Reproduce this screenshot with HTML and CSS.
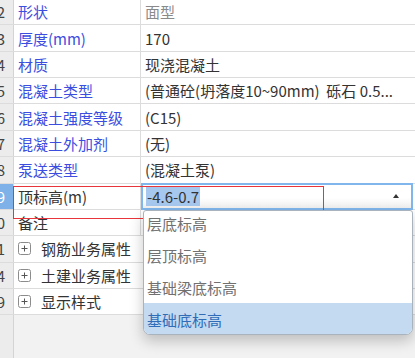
FILE: index.html
```html
<!DOCTYPE html>
<html lang="zh-CN">

<head>
	<meta charset="UTF-8">
	<meta name="viewport" content="width=device-width, initial-scale=1.0">
	<title>属性编辑</title>
	<link rel="stylesheet" href="styles.css">
</head>

<body>
	<div class="sheet">
		<div class="row"><div class="num">2</div><div class="label link">形状</div><div class="value muted">面型</div></div>
		<div class="row"><div class="num">3</div><div class="label link">厚度(mm)</div><div class="value">170</div></div>
		<div class="row"><div class="num">4</div><div class="label link">材质</div><div class="value">现浇混凝土</div></div>
		<div class="row"><div class="num">5</div><div class="label link">混凝土类型</div><div class="value">(普通砼(坍落度10~90mm)  砾石 0.5...</div></div>
		<div class="row"><div class="num">6</div><div class="label link">混凝土强度等级</div><div class="value">(C15)</div></div>
		<div class="row"><div class="num">7</div><div class="label link">混凝土外加剂</div><div class="value">(无)</div></div>
		<div class="row"><div class="num">8</div><div class="label link">泵送类型</div><div class="value">(混凝土泵)</div></div>
		<div class="row"><div class="num active">9</div><div class="label">顶标高(m)</div>
			<div class="value edit">
				<div class="combo"><span class="sel">-4.6-0.7</span><span class="arrow"></span></div>
			</div>
		</div>
		<div class="row"><div class="num">0</div><div class="label">备注</div><div class="value"></div></div>
		<div class="row"><div class="num">1</div>
			<div class="label wide"><svg class="plus" width="13" height="13" viewBox="0 0 13 13"><rect x="0.5" y="0.5" width="12" height="12" rx="2" fill="#fff" stroke="#8c8c8c"/><path d="M3.5 6.5h6M6.5 3.5v6" stroke="#555" stroke-width="1"/></svg>钢筋业务属性</div>
		</div>
		<div class="row"><div class="num">4</div>
			<div class="label wide"><svg class="plus" width="13" height="13" viewBox="0 0 13 13"><rect x="0.5" y="0.5" width="12" height="12" rx="2" fill="#fff" stroke="#8c8c8c"/><path d="M3.5 6.5h6M6.5 3.5v6" stroke="#555" stroke-width="1"/></svg>土建业务属性</div>
		</div>
		<div class="row"><div class="num">9</div>
			<div class="label wide"><svg class="plus" width="13" height="13" viewBox="0 0 13 13"><rect x="0.5" y="0.5" width="12" height="12" rx="2" fill="#fff" stroke="#8c8c8c"/><path d="M3.5 6.5h6M6.5 3.5v6" stroke="#555" stroke-width="1"/></svg>显示样式</div>
		</div>

		<!-- 标注框 -->
		<div class="mark"></div>

		<!-- 下拉列表 -->
		<div class="dropdown">
			<ul class="list">
				<li>层底标高</li>
				<li>层顶标高</li>
				<li>基础梁底标高</li>
				<li class="current">基础底标高</li>
			</ul>
		</div>
	</div>
</body>

</html>
```

FILE: styles.css
```css
* {
	box-sizing: border-box;
}

body {
	margin: 0;
	width: 415px;
	height: 358px;
	overflow: hidden;
	background: #f2f2f2;
	font-family: "Noto Sans CJK SC", "Noto Sans", sans-serif;
	font-size: 15px;
	color: #333;
}

.sheet {
	position: relative;
	height: 360px;
	margin-top: -1px;
	/* 行号列一直延伸到底部 */
	background: linear-gradient(to right, #ececec 13px, #d4d4d4 13px, #d4d4d4 14px, transparent 14px);
}

.row {
	display: flex;
	height: 26.36px;
	border-bottom: 1px solid #dcdcdc;
	background: #fff;
}

.num {
	width: 14px;
	flex: none;
	display: flex;
	justify-content: flex-end;
	align-items: center;
	padding-right: 8px;
	overflow: hidden;
	background: #ececec;
	border-right: 1px solid #d4d4d4;
	color: #444;
}

.num.active {
	background: #7db1e7;
	color: #fff;
}

.label {
	width: 127px;
	flex: none;
	display: flex;
	align-items: center;
	padding-left: 4px;
	border-right: 1px solid #dcdcdc;
	white-space: nowrap;
	overflow: hidden;
}

.label.link {
	color: #3b4ee0;
}

.label.wide {
	flex: 1;
	border-right: none;
}

.plus {
	flex: none;
	margin-right: 10px;
}

.value {
	flex: 1;
	display: flex;
	align-items: center;
	padding-left: 4px;
	white-space: pre;
	overflow: hidden;
}

.value.muted {
	color: #8a8a8a;
}

.value.edit {
	padding-left: 0;
	overflow: visible;
}

.combo {
	flex: 1;
	align-self: stretch;
	display: flex;
	align-items: center;
	margin: -1px 2px -1px 0;
	padding-left: 3px;
	border: 2px solid #80b6ec;
	background: linear-gradient(#fff 55%, #efefef);
}

.sel {
	padding: 0 1px;
	line-height: 19px;
	background: #a6c8ee;
}

.arrow {
	margin-left: auto;
	margin-right: 12px;
	border-left: 3px solid transparent;
	border-right: 3px solid transparent;
	border-bottom: 4px solid #333;
}

.mark {
	position: absolute;
	left: 13px;
	top: 187px;
	width: 311px;
	height: 33px;
	border: 1px solid #e8353b;
}

.dropdown {
	position: absolute;
	left: 143px;
	top: 211px;
	width: 270px;
	height: 125px;
	overflow: hidden;
	background: #fff;
	border: 1px solid #a9b3bd;
	border-radius: 3px 3px 7px 7px;
	box-shadow: 0 6px 14px rgba(0, 0, 0, 0.22);
}

.list {
	margin: -4px 0 0;
	padding: 0;
	list-style: none;
}

.list li {
	height: 32px;
	display: flex;
	align-items: center;
	padding-left: 3px;
	color: #707070;
}

.list li.current {
	background: #c4daf0;
	color: #2f6db8;
}
```
